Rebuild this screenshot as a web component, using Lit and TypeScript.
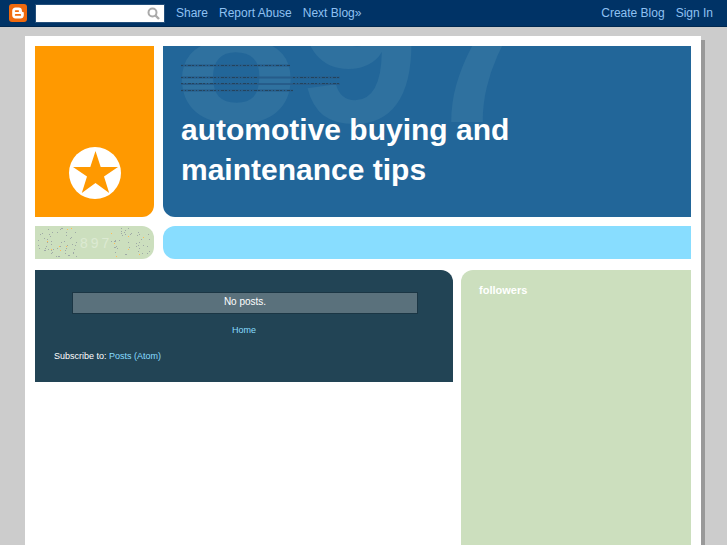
import { LitElement, html, css } from "lit";
import { customElement } from "lit/decorators.js";

// Scatters single-pixel specks over the date tab, leaving its middle clear.
function scatter(count: number, start: number): string {
  let seed = start;
  const next = (limit: number) => {
    seed = (seed * 16807) % 2147483647;
    return seed % limit;
  };
  let path = "";
  for (let i = 0; i < count; i++) {
    const side = next(2) ? 76 : 2;
    path += `M${side + next(40)} ${2 + next(29)}h1v1h-1z`;
  }
  return path;
}

const GREY_SPECKS = scatter(100, 4711);
const GOLD_SPECKS = scatter(14, 977);

@customElement("app-root")
export class AppRoot extends LitElement {
  static styles = css`
    :host {
      display: flex;
      flex-direction: column;
      min-height: 100vh;
      box-sizing: border-box;
      background: #cccccc;
      color: #ffffff;
      font-family: "Liberation Sans", Arial, sans-serif;
      font-size: 10px;
      overflow: hidden;
    }
    a { text-decoration: none; }

    .navbar {
      display: flex;
      align-items: center;
      box-sizing: border-box;
      height: 27px;
      padding: 0 14px 0 9px;
      background: #003366;
      border-bottom: 1px solid #002850;
      font-size: 12px;
    }
    .logo { display: block; width: 18px; height: 18px; }
    .search {
      display: flex;
      align-items: center;
      margin: 0 11px 0 8px;
      width: 130px;
      height: 19px;
      box-sizing: border-box;
      background: #ffffff;
      border: 1px solid #24507c;
    }
    .search input {
      flex: 1;
      min-width: 0;
      border: 0;
      padding: 0 4px;
      background: none;
      outline: none;
      font: inherit;
    }
    .search button {
      border: 0;
      padding: 0;
      margin-right: 4px;
      background: none;
      width: 13px;
      height: 13px;
    }
    .search svg { display: block; }
    .links { display: flex; gap: 11px; }
    .links a { color: #8fc1f2; }
    .links.right { margin-left: auto; }

    .page {
      flex: 1;
      display: flex;
      flex-direction: column;
      margin: 9px 26px 0 25px;
      padding: 10px 10px 0;
      background: #ffffff;
      box-shadow: 4px 4px 0 #999999;
    }
    .top {
      display: grid;
      grid-template-columns: 119px 1fr;
      grid-template-rows: 171px 33px;
      gap: 9px;
    }
    .badge {
      display: flex;
      justify-content: center;
      align-items: flex-end;
      padding-bottom: 18px;
      background: #ff9900;
      border-radius: 0 0 12px 0;
    }
    .badge svg { display: block; }
    .header {
      position: relative;
      overflow: hidden;
      padding: 64px 18px 0;
      background: #226699;
      border-radius: 0 0 0 12px;
    }
    .ghost {
      position: absolute;
      left: 12px;
      top: -110px;
      font-size: 220px;
      font-weight: bold;
      line-height: 220px;
      color: #2f719f;
    }
    .blurb { position: absolute; left: 18px; top: 17px; }
    h1 {
      position: relative;
      margin: 0;
      max-width: 400px;
      font-size: 30px;
      line-height: 40px;
    }
    .date {
      background: #ccdfbe;
      border-radius: 0 12px 12px 0;
      overflow: hidden;
    }
    .date svg { display: block; }
    .strip { background: #88ddff; border-radius: 12px 0 0 12px; }

    .content {
      flex: 1;
      display: grid;
      grid-template-columns: 1fr 230px;
      gap: 8px;
      margin-top: 11px;
    }
    main {
      align-self: start;
      box-sizing: border-box;
      padding: 22px 19px 20px;
      background: #224455;
      border-radius: 0 12px 0 0;
      line-height: 12px;
    }
    main a { color: #88ddff; }
    .status {
      margin: 0 16px 0 18px;
      height: 20px;
      line-height: 18px;
      border: 1px solid #1b3644;
      background: #5a717c;
      text-align: center;
    }
    .home {
      margin: 10px 0 14px;
      font-size: 9px;
      text-align: center;
    }
    .feed { margin: 0; font-size: 9px; }
    aside {
      padding: 13px 18px;
      background: #ccdfbe;
      border-radius: 12px 0 0 0;
    }
    h2 { margin: 0; font-size: 11px; line-height: 14px; }
  `;

  render() {
    return html`
      <nav class="navbar">
        <a href="#" aria-label="Blogger">
          <svg class="logo" viewBox="0 0 18 18">
            <rect width="18" height="18" rx="3" fill="#f06a0e" />
            <path fill="#fff" fill-rule="evenodd"
              d="M6.500 3.500h3.200c2 0 3.200 1.300 3.200 3v.6c0 .6.3.8.9.8.7 0 1 .3 1 1v2.400c0 2-1.400 3.300-3.300 3.300h-5c-2 0-3.300-1.400-3.300-3.300V6.800c0-2 1.400-3.300 3.300-3.300zM6.700 6.200a.9.9 0 000 1.800h2.500a.9.9 0 000-1.800zM6.700 10a.9.9 0 000 1.800h4.500a.9.9 0 000-1.800z" />
          </svg>
        </a>
        <form class="search">
          <input type="text" aria-label="Search" />
          <button type="button" aria-label="Search this blog">
            <svg width="13" height="13" viewBox="0 0 13 13" fill="none" stroke="#aaaaaa">
              <circle cx="5.500" cy="5.500" r="4" stroke-width="2" />
              <path d="M8.500 8.500L12 12" stroke-width="2.400" />
            </svg>
          </button>
        </form>
        <div class="links">
          <a href="#">Share</a><a href="#">Report Abuse</a><a href="#">Next Blog»</a>
        </div>
        <div class="links right">
          <a href="#">Create Blog</a><a href="#">Sign In</a>
        </div>
      </nav>

      <div class="page">
        <div class="top">
          <div class="badge">
            <svg width="52" height="52" viewBox="0 0 52 52">
              <circle cx="26" cy="26" r="26" fill="#fff" />
              <path fill="#ff9900" d="M26.500 4l5.200 16H49L35 29.600l5.200 16.400L26.500 36 12.800 46 18 29.600 4 20h17.300z" />
            </svg>
          </div>
          <header class="header">
            <div class="ghost" aria-hidden="true">897</div>
            <svg class="blurb" width="160" height="32" fill="none" aria-hidden="true">
              <path stroke="#265c8a" stroke-width="2" d="M0 2.500h109M0 14.500h159M0 21h159M0 27.500h112" />
              <path stroke="#24435c" stroke-dasharray="2 2 1 2 3 1"
                d="M0 2.500h109M0 14.500h76M112 14.500h46M0 20.500h76M112 20.500h46M0 27.500h112" />
            </svg>
            <h1>automotive buying and maintenance tips</h1>
          </header>
          <div class="date">
            <svg width="119" height="33" aria-hidden="true">
              <path d=${GREY_SPECKS} fill="#9fa9a6" />
              <path d=${GOLD_SPECKS} fill="#ffbb55" />
              <text x="45" y="22" font-size="14" letter-spacing="3" fill="#dcead2">897</text>
            </svg>
          </div>
          <div class="strip"></div>
        </div>

        <div class="content">
          <main>
            <div class="status">No posts.</div>
            <div class="home"><a href="#">Home</a></div>
            <p class="feed">Subscribe to: <a href="#">Posts (Atom)</a></p>
          </main>
          <aside><h2>followers</h2></aside>
        </div>
      </div>
    `;
  }
}
